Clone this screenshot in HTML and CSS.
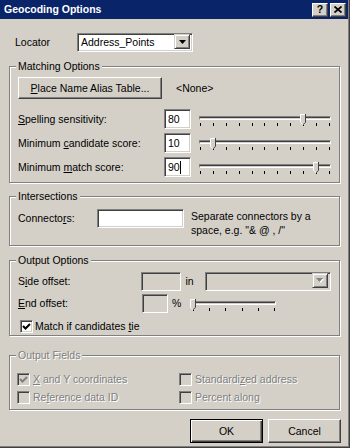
FILE: index.html
```html
<!DOCTYPE html>
<html>
<head>
<meta charset="utf-8">
<title>Geocoding Options</title>
<link rel="stylesheet" href="styles.css">
</head>
<body>
<div class="window">
	<div class="titlebar">
		<span class="title">Geocoding Options</span>
		<span class="tb-btn">?</span>
		<span class="tb-btn"><svg width="8" height="7" viewBox="0 0 8 7"><path d="M0.5 0.5l7 6M7.5 0.5l-7 6" stroke="#000" stroke-width="1.7"/></svg></span>
	</div>

	<div class="content">
		<div class="locator-row">
			<span class="locator-label">Locator</span>
			<div class="combo field">
				<span class="combo-text">Address_Points</span>
				<span class="combo-btn"><svg width="7" height="4" viewBox="0 0 7 4"><path d="M0 0h7l-3.5 4z" fill="#000"/></svg></span>
			</div>
		</div>

		<div class="group matching">
			<div class="group-title">Matching Options</div>
			<div class="alias-row">
				<span class="button alias-btn"><u>P</u>lace Name Alias Table...</span>
				<span class="alias-value">&lt;None&gt;</span>
			</div>
			<div class="score-row">
				<span class="score-label"><u>S</u>pelling sensitivity:</span>
				<span class="field score-field">80</span>
				<div class="slider wide">
					<div class="track"></div>
					<div class="ticks"><i></i><i></i><i></i><i></i><i></i><i></i><i></i><i></i><i></i><i></i><i></i></div>
					<svg class="thumb" style="left: calc((100% - 3px) * 0.8 - 2px)" width="6" height="11" viewBox="0 0 6 11"><path d="M0 0h6v8l-3 3l-3-3z" fill="#d4d0c8"/><path d="M0.5 8.3V0.5H5" fill="none" stroke="#fff"/><path d="M5.5 0v8.3L3 10.8" fill="none" stroke="#404040"/><path d="M0.5 8.3L3 10.8" fill="none" stroke="#fff"/></svg>
				</div>
			</div>
			<div class="score-row">
				<span class="score-label">Minimum <u>c</u>andidate score:</span>
				<span class="field score-field">10</span>
				<div class="slider wide">
					<div class="track"></div>
					<div class="ticks"><i></i><i></i><i></i><i></i><i></i><i></i><i></i><i></i><i></i><i></i><i></i></div>
					<svg class="thumb" style="left: calc((100% - 3px) * 0.1 - 2px)" width="6" height="11" viewBox="0 0 6 11"><path d="M0 0h6v8l-3 3l-3-3z" fill="#d4d0c8"/><path d="M0.5 8.3V0.5H5" fill="none" stroke="#fff"/><path d="M5.5 0v8.3L3 10.8" fill="none" stroke="#404040"/><path d="M0.5 8.3L3 10.8" fill="none" stroke="#fff"/></svg>
				</div>
			</div>
			<div class="score-row">
				<span class="score-label">Minimum <u>m</u>atch score:</span>
				<span class="field score-field">90<span class="caret"></span></span>
				<div class="slider wide">
					<div class="track"></div>
					<div class="ticks"><i></i><i></i><i></i><i></i><i></i><i></i><i></i><i></i><i></i><i></i><i></i></div>
					<svg class="thumb" style="left: calc((100% - 3px) * 0.9 - 2px)" width="6" height="11" viewBox="0 0 6 11"><path d="M0 0h6v8l-3 3l-3-3z" fill="#d4d0c8"/><path d="M0.5 8.3V0.5H5" fill="none" stroke="#fff"/><path d="M5.5 0v8.3L3 10.8" fill="none" stroke="#404040"/><path d="M0.5 8.3L3 10.8" fill="none" stroke="#fff"/></svg>
				</div>
			</div>
		</div>

		<div class="group intersections">
			<div class="group-title">Intersections</div>
			<div class="connector-row">
				<span class="connector-label">Connecto<u>r</u>s:</span>
				<span class="field connector-field"></span>
				<span class="connector-hint">Separate connectors by a<br>space, e.g. "&amp; @ , /"</span>
			</div>
		</div>

		<div class="group output">
			<div class="group-title">Output Options</div>
			<div class="offset-row">
				<span class="offset-label">S<u>i</u>de offset:</span>
				<span class="field disabled side-field"></span>
				<span class="unit">in</span>
				<div class="combo field disabled unit-combo">
					<span class="combo-text"></span>
					<span class="combo-btn"><svg width="8" height="5" viewBox="0 0 8 5"><path d="M1 1h7l-3.5 4z" fill="#fff"/><path d="M0 0h7l-3.5 4z" fill="#808080"/></svg></span>
				</div>
			</div>
			<div class="offset-row">
				<span class="offset-label"><u>E</u>nd offset:</span>
				<span class="field disabled end-field"></span>
				<span class="unit">%</span>
				<div class="slider short">
					<div class="track"></div>
					<div class="ticks"><i></i><i></i><i></i><i></i><i></i><i></i></div>
					<svg class="thumb" style="left: calc((100% - 3px) * 0 - 2px)" width="6" height="11" viewBox="0 0 6 11"><path d="M0 0h6v8l-3 3l-3-3z" fill="#d4d0c8"/><path d="M0.5 8.3V0.5H5" fill="none" stroke="#fff"/><path d="M5.5 0v8.3L3 10.8" fill="none" stroke="#404040"/><path d="M0.5 8.3L3 10.8" fill="none" stroke="#fff"/></svg>
				</div>
			</div>
			<label class="check tie-check">
				<span class="box"><svg width="9" height="9" viewBox="0 0 9 9"><path d="M1 4l2.5 2.5L8 2" fill="none" stroke="#000" stroke-width="2"/></svg></span>
				<span>Match if candidates <u>t</u>ie</span>
			</label>
		</div>

		<div class="group fields">
			<div class="group-title disabled-text">Output Fields</div>
			<div class="field-grid">
				<label class="check disabled-check">
					<span class="box"><svg width="9" height="9" viewBox="0 0 9 9"><path d="M1 4l2.5 2.5L8 2" fill="none" stroke="#808080" stroke-width="2"/></svg></span>
					<span class="disabled-text"><u>X</u> and Y coordinates</span>
				</label>
				<label class="check disabled-check">
					<span class="box"></span>
					<span class="disabled-text">Standardi<u>z</u>ed address</span>
				</label>
				<label class="check disabled-check">
					<span class="box"></span>
					<span class="disabled-text">Re<u>f</u>erence data ID</span>
				</label>
				<label class="check disabled-check">
					<span class="box"></span>
					<span class="disabled-text">Percent alon<u>g</u></span>
				</label>
			</div>
		</div>

		<div class="actions">
			<span class="button default">OK</span>
			<span class="button">Cancel</span>
		</div>
	</div>
</div>
</body>
</html>
```

FILE: styles.css
```css
* {
	box-sizing: border-box;
}

body {
	margin: 0;
	font-family: "Liberation Sans", Arial, sans-serif;
	font-size: 10.5px;
	line-height: 13px;
	color: #000;
	background: #d4d0c8;
}

.window {
	width: 350px;
	height: 448px;
	background: #d4d0c8;
	border-right: 1px solid #404040;
	border-bottom: 1px solid #404040;
	box-shadow: inset -1px -1px 0 #808080;
	display: flex;
	flex-direction: column;
}

/* title bar */
.titlebar {
	height: 19px;
	margin-right: 1px;
	padding: 0 2px 0 4px;
	background: #0a246a;
	color: #fff;
	display: flex;
	align-items: center;
}

.title {
	flex: 1;
	font-weight: bold;
}

.tb-btn {
	width: 16px;
	height: 14px;
	background: #d4d0c8;
	border: 1px solid;
	border-color: #fff #404040 #404040 #fff;
	box-shadow: inset -1px -1px 0 #808080;
	color: #000;
	font-weight: bold;
	display: flex;
	align-items: center;
	justify-content: center;
}

.tb-btn + .tb-btn {
	margin-left: 2px;
}

.content {
	flex: 1;
	padding: 0 8px 0 9px;
	display: flex;
	flex-direction: column;
}

/* classic controls */
.field {
	display: block;
	height: 19px;
	padding: 2px 3px 0;
	border: 1px solid;
	border-color: #808080 #fff #fff #808080;
	box-shadow: inset 1px 1px 0 #404040, inset -1px -1px 0 #d4d0c8;
	background: #fff;
}

.field.disabled {
	background: #d4d0c8;
}

.button {
	display: flex;
	align-items: center;
	justify-content: center;
	background: #d4d0c8;
	border: 1px solid;
	border-color: #fff #404040 #404040 #fff;
	box-shadow: inset -1px -1px 0 #808080;
}

.button.default {
	border: 1px solid #000;
	box-shadow: inset 1px 1px 0 #fff, inset -1px -1px 0 #404040, inset -2px -2px 0 #808080;
}

.combo {
	display: flex;
	padding: 2px;
}

.combo-text {
	flex: 1;
	padding-left: 1px;
	line-height: 13px;
}

.combo-btn {
	width: 16px;
	height: 15px;
	margin-top: -2px;
	background: #d4d0c8;
	border: 1px solid;
	border-color: #d4d0c8 #404040 #404040 #d4d0c8;
	box-shadow: inset 1px 1px 0 #fff, inset -1px -1px 0 #808080;
	display: flex;
	align-items: center;
	justify-content: center;
}

.disabled-text {
	color: #808080;
	text-shadow: 1px 1px 0 #fff;
}

/* group boxes */
.group {
	margin-right: 1px;
	padding: 0 8px;
	border: 1px solid #808080;
	box-shadow: 1px 1px 0 #fff, inset 1px 1px 0 #fff;
}

.group-title {
	width: fit-content;
	margin: -7px 0 0 -2px;
	padding: 0 2px;
	background: #d4d0c8;
}

/* locator */
.locator-row {
	margin-top: 14px;
	display: flex;
	align-items: center;
}

.locator-label {
	width: 68px;
	padding-left: 6px;
}

.locator-row .combo {
	width: 116px;
}

/* matching options */
.matching {
	margin-top: 14px;
	padding-bottom: 5px;
}

.alias-row {
	margin-top: 4px;
	display: flex;
	align-items: center;
}

.alias-btn {
	width: 144px;
	height: 22px;
}

.alias-value {
	margin-left: 14px;
}

.score-row {
	margin-top: 4px;
	display: flex;
	align-items: center;
}

.alias-row + .score-row {
	margin-top: 10px;
}

.score-label {
	width: 146px;
}

.score-field {
	width: 27px;
	height: 20px;
	padding-top: 3px;
}

.caret {
	display: inline-block;
	width: 1px;
	height: 13px;
	vertical-align: top;
	background: #000;
}

.slider {
	position: relative;
	align-self: flex-start;
	padding-top: 7px;
	margin-left: 8px;
}

.slider.wide {
	width: 132px;
}

.slider.short {
	width: 84px;
}

.track {
	height: 4px;
	border: 1px solid;
	border-color: #808080 #fff #fff #808080;
	background: #d4d0c8;
	box-shadow: inset 0 1px 0 #404040;
}

.ticks {
	margin-top: 3px;
	padding: 0 1px;
	display: flex;
	justify-content: space-between;
}

.ticks i {
	width: 1px;
	height: 3px;
	background: #000;
}

.thumb {
	position: absolute;
	top: 5px;
	display: block;
}

/* intersections */
.intersections {
	margin-top: 13px;
	padding-bottom: 8px;
}

.connector-row {
	margin-top: 6px;
	display: flex;
	align-items: flex-start;
}

.connector-label {
	width: 79px;
	margin-top: 3px;
}

.connector-field {
	width: 87px;
}

.connector-hint {
	margin: 0 0 0 7px;
	line-height: 14px;
}

/* output options */
.output {
	margin-top: 14px;
	padding-bottom: 2px;
}

.offset-row {
	margin-top: 3px;
	display: flex;
	align-items: center;
}

.group-title + .offset-row {
	margin-top: 5px;
}

.offset-label {
	width: 124px;
}

.side-field {
	width: 41px;
}

.end-field {
	width: 26px;
}

.unit {
	width: 24px;
	padding-left: 4px;
}

.offset-row .unit:first-of-type {
	padding-left: 7px;
}

.unit-combo {
	width: 127px;
}

.offset-row .slider {
	margin-left: 0;
}

.check {
	display: flex;
	align-items: center;
	height: 13px;
}

.box {
	width: 13px;
	height: 13px;
	margin-right: 3px;
	border: 1px solid;
	border-color: #808080 #fff #fff #808080;
	box-shadow: inset 1px 1px 0 #404040, inset -1px -1px 0 #d4d0c8;
	background: #fff;
	display: flex;
	align-items: center;
	justify-content: center;
}

.tie-check {
	margin: 7px 0 0 2px;
}

.tie-check .box {
	margin-right: 2px;
}

/* output fields */
.fields {
	margin-top: 19px;
	padding-bottom: 5px;
}

.field-grid {
	margin: 11px 0 0 -1px;
	display: grid;
	grid-template-columns: 162px 1fr;
	row-gap: 5px;
}

.disabled-check .box {
	background: #d4d0c8;
}

/* dialog buttons */
.actions {
	margin-top: 9px;
	display: flex;
	justify-content: flex-end;
	gap: 5px;
}

.actions .button {
	width: 73px;
	height: 24px;
}
```
